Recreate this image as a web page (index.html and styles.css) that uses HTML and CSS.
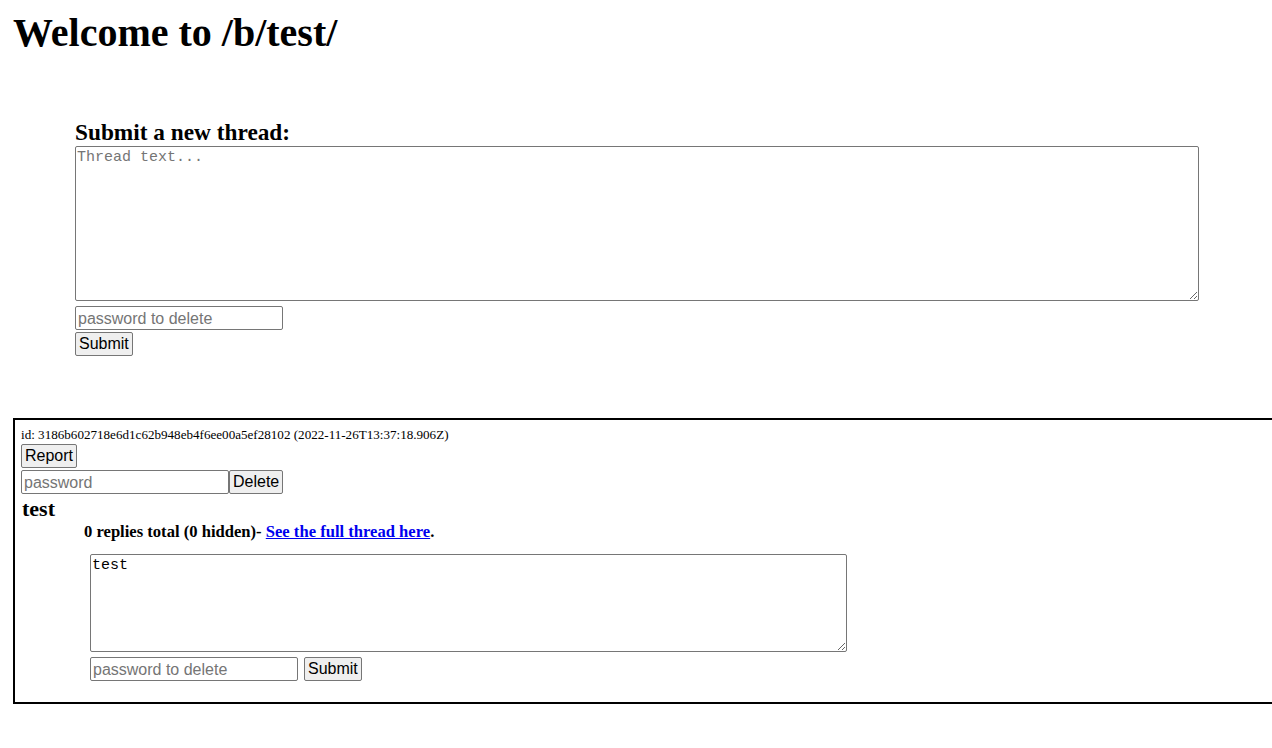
FILE: index.html
```html
<!DOCTYPE html>
<html lang="en">
<head>
<meta charset="utf-8">
<title>/b/test/</title>
<link rel="stylesheet" href="styles.css">
</head>
<body>
<h1 class="title">Welcome to /b/test/</h1>

<form class="new-thread">
  <h2 class="form-title">Submit a new thread:</h2>
  <textarea class="thread-text" placeholder="Thread text..."></textarea>
  <input class="pw pw-main" type="text" placeholder="password to delete">
  <button class="btn" type="button">Submit</button>
</form>

<div class="thread">
  <div class="meta">id: 3186b602718e6d1c62b948eb4f6ee00a5ef28102 (2022-11-26T13:37:18.906Z)</div>
  <div class="row"><button class="btn" type="button">Report</button></div>
  <div class="row row-del">
    <input class="pw" type="text" placeholder="password">
    <button class="btn" type="button">Delete</button>
  </div>
  <h3 class="thread-title">test</h3>
  <div class="replies">
    <p class="replies-info">0 replies total (0 hidden)- <a href="#">See the full thread here</a>.</p>
    <form class="reply-form">
      <textarea class="reply-text">test</textarea>
      <div class="reply-row">
        <input class="pw" type="text" placeholder="password to delete">
        <button class="btn" type="button">Submit</button>
      </div>
    </form>
  </div>
</div>
</body>
</html>
```

FILE: styles.css
```css
html {
  overflow-x: hidden;
}
body {
  margin: 0;
  padding: 0 0 0 13px;
  font-family: "Liberation Serif", "Times New Roman", serif;
  color: #000;
  background: #fff;
}
.title {
  margin: 0;
  padding-top: 10px;
  font-size: 40px;
  line-height: 46px;
  font-weight: bold;
}
.new-thread {
  display: flex;
  flex-direction: column;
  align-items: flex-start;
  margin: 62px 0 0 62px;
}
.form-title {
  margin: 0;
  font-size: 23.3px;
  line-height: 28px;
}
textarea {
  box-sizing: border-box;
  font-family: "Liberation Mono", "Courier New", monospace;
  font-size: 15px;
  border: 1px solid #767676;
  border-radius: 2px;
  padding: 2px 1px 1px 1px;
  margin: 0;
  color: #000;
  resize: both;
}
textarea::placeholder,
input::placeholder {
  color: #757575;
}
.thread-text {
  width: 1124px;
  height: 155px;
  margin-bottom: 5px;
}
.pw {
  box-sizing: border-box;
  width: 208px;
  height: 24px;
  margin: 0;
  padding: 2px 2px 0 2px;
  font-family: "Liberation Sans", Arial, sans-serif;
  font-size: 16px;
  border: 1px solid #767676;
  border-radius: 2px;
  color: #000;
}
.pw-main {
  margin-bottom: 2px;
}
.btn {
  box-sizing: border-box;
  height: 24px;
  margin: 0;
  padding: 0 3px;
  font-family: "Liberation Sans", Arial, sans-serif;
  font-size: 16px;
  color: #000;
  background: #efefef;
  border: 1px solid #767676;
  border-radius: 2px;
}
.thread {
  margin: 62px -40px 0 0;
  border: 2px solid #000;
  padding: 8px 6px 21px 6px;
}
.meta {
  font-size: 13.1px;
  line-height: 14px;
}
.row {
  display: flex;
  margin-top: 2px;
}
.thread-title {
  margin: 2px 0 0 1px;
  font-size: 22px;
  line-height: 26px;
}
.replies {
  padding-left: 63px;
}
.replies-info {
  margin: 0;
  font-size: 16.6px;
  line-height: 19px;
  font-weight: bold;
}
.replies-info a {
  color: #0000ee;
  text-decoration: underline;
}
.reply-form {
  display: flex;
  flex-direction: column;
  align-items: flex-start;
  padding-left: 6px;
  margin-top: 13px;
}
.reply-text {
  width: 757px;
  height: 98px;
  margin-bottom: 5px;
}
.reply-row {
  display: flex;
  gap: 6px;
}
```
